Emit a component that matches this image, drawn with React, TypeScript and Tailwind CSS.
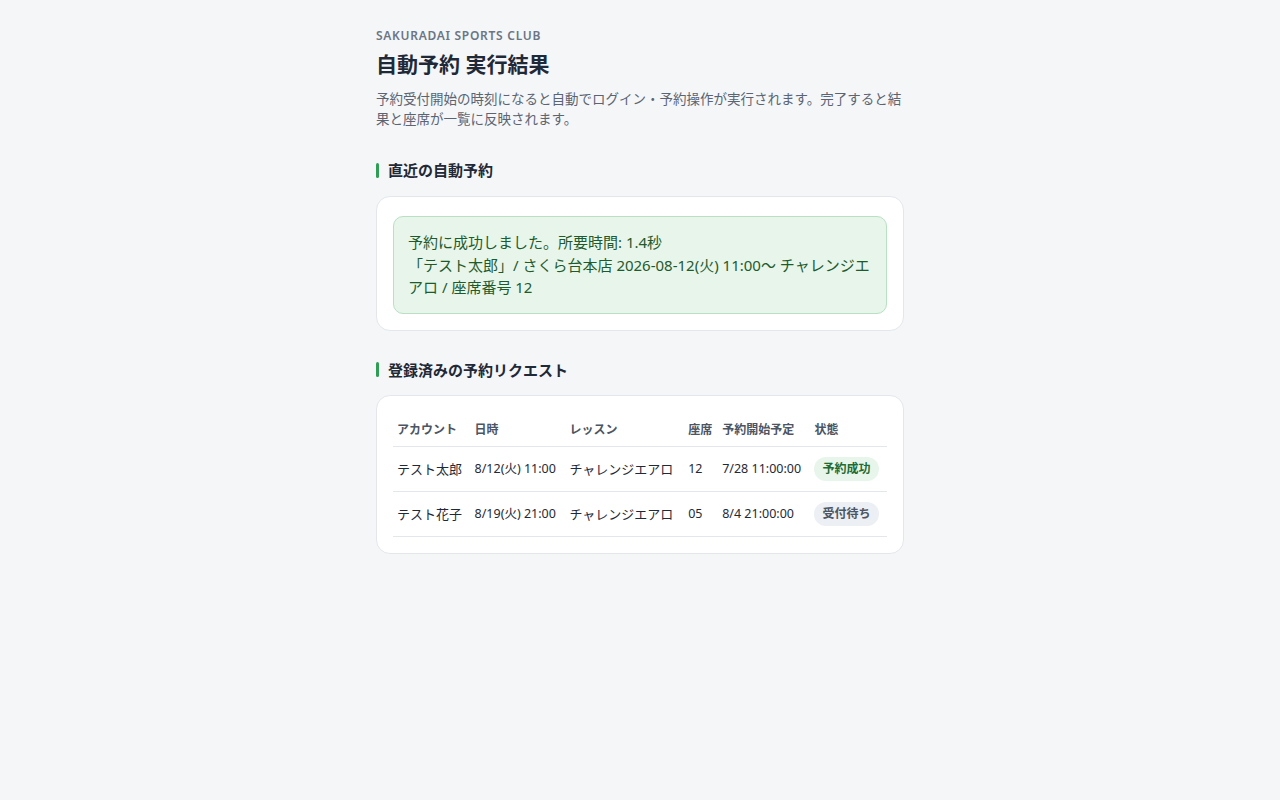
import React from "react";

const rows = [
  { account: "テスト太郎", date: "8/12(火) 11:00", lesson: "チャレンジエアロ", seat: "12", start: "7/28 11:00:00", status: "予約成功", ok: true },
  { account: "テスト花子", date: "8/19(火) 21:00", lesson: "チャレンジエアロ", seat: "05", start: "8/4 21:00:00", status: "受付待ち", ok: false },
];

function SectionTitle({ children }: { children: React.ReactNode }) {
  return (
    <div className="flex items-center gap-[9px]">
      <span className="w-[3px] h-[15px] rounded-sm bg-[#2f9e55]" />
      <h2 className="text-[15px] leading-[22px] font-bold text-[#1f2937]">{children}</h2>
    </div>
  );
}

export default function App() {
  return (
    <div
      className="min-h-[800px] bg-[#f4f6f8]"
      style={{ fontFamily: '"Noto Sans", "Noto Sans CJK JP", sans-serif' }}
    >
      <div className="w-[528px] mx-auto pt-[27px] pb-10">
        <div className="text-[12px] leading-[18px] font-semibold tracking-[0.06em] text-[#6b7585]">
          SAKURADAI SPORTS CLUB
        </div>
        <h1 className="mt-[5px] text-[21px] leading-[28px] font-bold text-[#1f2937]">自動予約 実行結果</h1>
        <p className="mt-[11px] text-[13.5px] leading-[20px] text-[#5b6472]">
          予約受付開始の時刻になると自動でログイン・予約操作が実行されます。完了すると結果と座席が一覧に反映されます。
        </p>

        <div className="mt-[30px]">
          <SectionTitle>直近の自動予約</SectionTitle>
        </div>
        <div className="mt-[15px] bg-white border border-[#e3e7ec] rounded-[14px] pt-[19px] px-4 pb-4">
          <div className="bg-[#e8f5ea] border border-[#b9e0c2] rounded-[10px] p-[14px] text-[15px] leading-[22.5px] text-[#1e5b2c]">
            <div>予約に成功しました。所要時間: 1.4秒</div>
            <div>「テスト太郎」/ さくら台本店 2026-08-12(火) 11:00〜 チャレンジエアロ / 座席番号 12</div>
          </div>
        </div>

        <div className="mt-[28px]">
          <SectionTitle>登録済みの予約リクエスト</SectionTitle>
        </div>
        <div className="mt-[14px] bg-white border border-[#e3e7ec] rounded-[14px] p-4">
          <table className="w-full border-collapse text-left">
            <thead>
              <tr className="border-b border-[#e3e7ec]">
                {["アカウント", "日時", "レッスン", "座席", "予約開始予定", "状態"].map((h) => (
                  <th key={h} className="px-1 pt-[9px] pb-[7px] text-[12px] leading-[18px] font-bold text-[#4b5563] whitespace-nowrap">
                    {h}
                  </th>
                ))}
              </tr>
            </thead>
            <tbody>
              {rows.map((r) => (
                <tr key={r.account} className="border-b border-[#e3e7ec]">
                  <td className="px-1 py-[10px] text-[13px] leading-[24px] text-[#1f2937] whitespace-nowrap">{r.account}</td>
                  <td className="px-1 py-[10px] text-[12.5px] leading-[24px] text-[#1f2937] whitespace-nowrap">{r.date}</td>
                  <td className="px-1 py-[10px] text-[13px] leading-[24px] text-[#1f2937] whitespace-nowrap">{r.lesson}</td>
                  <td className="px-1 py-[10px] text-[12.5px] leading-[24px] text-[#1f2937] whitespace-nowrap">{r.seat}</td>
                  <td className="px-1 py-[10px] text-[12.5px] leading-[24px] text-[#1f2937] whitespace-nowrap">{r.start}</td>
                  <td className="px-1 py-[10px] whitespace-nowrap">
                    <span
                      className={
                        r.ok
                          ? "flex w-fit rounded-full px-2 h-6 items-center text-[12px] font-bold bg-[#e8f5ea] text-[#1e6b34]"
                          : "flex w-fit rounded-full px-2 h-6 items-center text-[12px] font-bold bg-[#eceff3] text-[#4b5563]"
                      }
                    >
                      {r.status}
                    </span>
                  </td>
                </tr>
              ))}
            </tbody>
          </table>
        </div>
      </div>
    </div>
  );
}
